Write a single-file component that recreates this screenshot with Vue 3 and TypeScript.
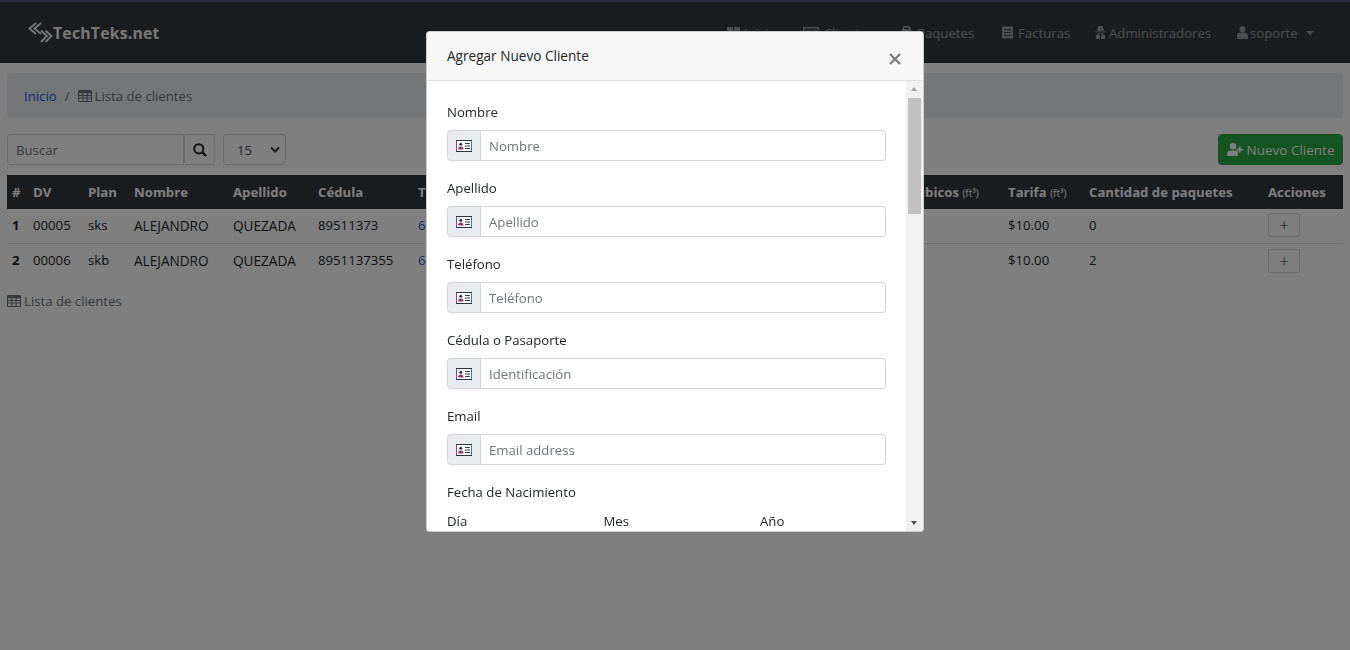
<template>
  <div class="page">
    <nav class="navbar">
      <a class="brand">
        <svg class="brand-logo" width="25" height="21" viewBox="0 0 25 21" fill="none" stroke="currentColor" stroke-width="1.8">
          <path d="M8 1 1.500 6.500 8 12M13 1 6.500 6.500 13 12" />
          <path d="M13 8.500 19 14l-6 6M17.500 8.500 23.500 14l-6 6" />
        </svg>
        TechTeks.net
      </a>
      <ul class="nav-links">
        <li v-for="item in navItems" :key="item.label" :style="{ width: item.width + 'px' }">
          <svg :width="item.iconW" height="13" viewBox="0 0 14 14" preserveAspectRatio="none" fill="currentColor" :style="{ marginRight: item.gap + 'px' }">
            <path :d="item.icon" fill-rule="evenodd" />
          </svg>
          {{ item.label }}<span v-if="item.caret" class="caret"></span>
        </li>
      </ul>
    </nav>

    <main class="content">
      <div class="breadcrumb">
        <a class="link">Inicio</a>
        <span class="sep">/</span>
        <svg class="table-icon" width="14" height="12" viewBox="0 0 14 12" fill="currentColor"><path :d="tableIcon" fill-rule="evenodd" /></svg>
        <span>Lista de clientes</span>
      </div>

      <div class="toolbar">
        <input class="search" placeholder="Buscar" />
        <button class="search-btn">
          <svg width="14" height="14" viewBox="0 0 14 14" fill="none" stroke="#212529" stroke-width="2"><circle cx="5.800" cy="5.800" r="4.600" /><path d="M9.200 9.200 13 13" stroke-width="2.400" /></svg>
        </button>
        <div class="per-page">
          <span>15</span>
          <svg width="10" height="8" viewBox="0 0 10 8" fill="none" stroke="#343a40" stroke-width="2"><path d="M1 1.500 5 5.500 9 1.500" /></svg>
        </div>
        <button class="new-btn">
          <svg width="16" height="13" viewBox="0 0 16 13" fill="currentColor"><path :d="userPlusIcon" /></svg>
          Nuevo Cliente
        </button>
      </div>

      <table class="clients">
        <colgroup>
          <col v-for="w in colWidths" :key="w.id" :style="{ width: w.px + 'px' }" />
        </colgroup>
        <thead>
          <tr>
            <th>#</th><th>DV</th><th>Plan</th><th>Nombre</th><th>Apellido</th><th>Cédula</th><th>Teléfono</th>
            <th>Email</th><th>Peso (lb)</th><th>Cúbicos <small>(ft³)</small></th><th>Tarifa <small>(ft³)</small></th>
            <th>Cantidad de paquetes</th><th>Acciones</th>
          </tr>
        </thead>
        <tbody>
          <tr v-for="(row, i) in clients" :key="row.dv">
            <th>{{ i + 1 }}</th>
            <td>{{ row.dv }}</td>
            <td>{{ row.plan }}</td>
            <td class="caps">ALEJANDRO</td>
            <td class="caps">QUEZADA</td>
            <td>{{ row.cedula }}</td>
            <td><a class="link">{{ row.phone }}</a></td>
            <td></td>
            <td></td>
            <td></td>
            <td>$10.00</td>
            <td>{{ row.count }}</td>
            <td><button class="plus">+</button></td>
          </tr>
        </tbody>
      </table>

      <div class="caption">
        <svg class="table-icon" width="14" height="12" viewBox="0 0 14 12" fill="currentColor"><path :d="tableIcon" fill-rule="evenodd" /></svg>
        Lista de clientes
      </div>
    </main>

    <div class="backdrop"></div>

    <div class="modal">
      <header class="modal-header">
        <h5>Agregar Nuevo Cliente</h5>
        <svg class="close" width="12" height="12" viewBox="0 0 12 12" stroke="#7a7a7a" stroke-width="2.200"><path d="M1 1l10 10M11 1 1 11" /></svg>
      </header>
      <div class="modal-main">
        <form class="modal-body">
          <div v-for="field in fields" :key="field.label" class="form-group">
            <label>{{ field.label }}</label>
            <div class="input-group">
              <span class="addon">
                <svg width="16" height="12" viewBox="0 0 16 12" fill="none">
                  <rect x=".5" y=".5" width="15" height="11" fill="#fff" stroke="#2c3350" />
                  <path d="M.5 1v10" stroke="#8a3f9c" />
                  <path d="M15.500 1v10" stroke="#3d7f98" />
                  <circle cx="4.800" cy="4.200" r="1.500" fill="#2c3350" />
                  <path d="M2 9.500c0-2 1.200-3 2.800-3s2.800 1 2.800 3z" fill="#8c3a5c" />
                  <path d="M9 3.500h5M9 6h5M9 8.500h5" stroke="#2f3f55" />
                </svg>
              </span>
              <input :placeholder="field.placeholder" />
            </div>
          </div>
          <div class="birth-title">Fecha de Nacimiento</div>
          <div class="birth-row">
            <span>Día</span><span>Mes</span><span>Año</span>
          </div>
        </form>
        <div class="scrollbar">
          <span class="arrow up"></span>
          <div class="track"><div class="thumb"></div></div>
          <span class="arrow down"></span>
        </div>
      </div>
    </div>
  </div>
</template>

<script setup lang="ts">
const tableIcon = 'M1.300 0h11.400C13.400 0 14 .6 14 1.300v9.400c0 .7-.6 1.300-1.300 1.300H1.300C.6 12 0 11.400 0 10.700V1.300C0 .6.6 0 1.300 0zM1 3.200V5h3.300V3.200zM5.300 3.200V5h3.400V3.200zM9.700 3.200V5H13V3.200zM1 6v1.600h3.300V6zM5.300 6v1.600h3.400V6zM9.700 6v1.600H13V6zM1 8.600V11h3.300V8.600zM5.300 8.600V11h3.400V8.600zM9.700 8.600V11H13V8.600z'
const userPlusIcon = 'M6 0a3.200 3.200 0 1 1 0 6.400A3.200 3.200 0 0 1 6 0zM0 13v-1.800C0 9 1.600 7.400 3.600 7.400h4.800c1 0 1.900.4 2.500 1V13zM12 3.600h1.600v2.200H16v1.600h-2.400v2.200H12V7.400H9.600V5.800H12z'

const navItems = [
  { label: 'Inicio', width: 76, iconW: 13, gap: 4, icon: 'M0 1h6.500v5.500H0zM7.500 1H14v5.500H7.500zM0 7.500h6.500V13H0zM7.500 7.500H14V13H7.500z' },
  { label: 'Clientes', width: 98, iconW: 16, gap: 5, icon: 'M0 1h14v12H0zM1.300 2.800v8.900h11.400V2.800zM3 4.500h3v3H3zM8 4.500h4v1H8zM8 6.500h4v1H8zM3 8.500h9v2H3z' },
  { label: 'Paquetes', width: 101, iconW: 11, gap: 5, icon: 'M3 0h8l2 4v9H1V4zM4.500 1.500 3.800 3.500h6.400L9.500 1.500z' },
  { label: 'Facturas', width: 93, iconW: 11, gap: 5, icon: 'M0 .5h14V13.500H0zM2.500 3.500v1.200h9V3.500zM2.500 6.400v1.200h9V6.400zM2.500 9.300v1.200h9V9.300z' },
  { label: 'Administradores', width: 142, iconW: 11, gap: 3, icon: 'M4 0h6l1.500 5h-9zM0 5.800h14v1H0zM3.500 7.500h2.500v1.500H3.500zM8 7.500h2.500v1.500H8zM1 10l3-1 2 1 .5 4H1zM13 10l-3-1-2 1-.5 4H13z' },
  { label: 'soporte', width: 86, iconW: 11, gap: 2, caret: true, icon: 'M7 0a3.800 3.800 0 0 1 3.800 3.800c0 1.700-1.100 3.200-3.800 3.200S3.200 5.500 3.200 3.800A3.800 3.800 0 0 1 7 0zM0 14v-3.500C0 8.600 1.800 7.400 3.500 7.400h7c1.700 0 3.500 1.200 3.500 3.100V14z' },
]

const colWidths = [21, 55, 46, 99, 85, 100, 210, 180, 100, 100, 81, 179, 80].map((px, id) => ({ id, px }))

const clients = [
  { dv: '00005', plan: 'sks', cedula: '89511373', phone: '6000-0000', count: 0 },
  { dv: '00006', plan: 'skb', cedula: '8951137355', phone: '6000-0000', count: 2 },
]

const fields = [
  { label: 'Nombre', placeholder: 'Nombre' },
  { label: 'Apellido', placeholder: 'Apellido' },
  { label: 'Teléfono', placeholder: 'Teléfono' },
  { label: 'Cédula o Pasaporte', placeholder: 'Identificación' },
  { label: 'Email', placeholder: 'Email address' },
]
</script>

<style>
html, body { overflow: hidden; }
</style>

<style scoped>
.page {
  height: 650px;
  background: #fff;
  color: #212529;
  font-family: "Open Sans", "Liberation Sans", sans-serif;
  font-size: 13.2px;
  box-sizing: border-box;
}

.navbar {
  height: 63px;
  box-sizing: border-box;
  border-top: 2px solid #5a5a8c;
  background: #343a40;
  display: flex;
  align-items: center;
  justify-content: space-between;
  padding: 0 27px 0 28px;
}

.brand {
  display: flex;
  align-items: center;
  color: #f0f0f0;
  font-weight: 700;
  font-size: 15.8px;
  letter-spacing: .2px;
}

.nav-links {
  display: flex;
  list-style: none;
  margin: 0;
  padding: 0;
  color: rgba(255, 255, 255, .5);
}

.nav-links li {
  display: flex;
  align-items: center;
  white-space: nowrap;
}

.caret {
  margin-left: 8px;
  border-top: 4px solid currentColor;
  border-left: 4px solid transparent;
  border-right: 4px solid transparent;
}

.content { padding: 10px 7px; }

.breadcrumb {
  height: 45px;
  box-sizing: border-box;
  padding: 0 17px;
  border-radius: 4px;
  background: #e9ecef;
  color: #6c757d;
  display: flex;
  align-items: center;
}

.sep { margin: 0 8px; }
.table-icon { margin-right: 3px; }
.link { color: #1060f0; }

.toolbar {
  margin-top: 16px;
  display: flex;
  align-items: center;
}

.search {
  width: 177px;
  height: 31px;
  box-sizing: border-box;
  padding: 0 8px;
  border: 1px solid #ced4da;
  border-radius: 4px 0 0 4px;
  font: inherit;
}

.search::placeholder, .input-group input::placeholder { color: #6c757d; }

.search-btn {
  width: 31px;
  height: 31px;
  padding: 0;
  background: #fff;
  border: 1px solid #ced4da;
  border-radius: 3px 4px 4px 3px;
  display: flex;
  align-items: center;
  justify-content: center;
}

.per-page {
  width: 63px;
  height: 31px;
  box-sizing: border-box;
  margin-left: 8px;
  padding: 0 5px 0 13px;
  border: 1px solid #ced4da;
  border-radius: 4px;
  color: #495057;
  display: flex;
  align-items: center;
  justify-content: space-between;
}

.new-btn {
  margin-left: auto;
  width: 125px;
  height: 31px;
  padding: 0;
  border: 1px solid #28a745;
  border-radius: 4px;
  background: #28a745;
  color: #fff;
  font: inherit;
  font-size: 13.500px;
  display: flex;
  align-items: center;
  justify-content: center;
  gap: 4px;
}

.clients {
  width: 1336px;
  margin-top: 10px;
  border-collapse: collapse;
  table-layout: fixed;
}

.clients th, .clients td {
  height: 34px;
  padding: 0 5px;
  text-align: left;
  white-space: nowrap;
  box-sizing: border-box;
}

.clients thead th {
  background: #343a40;
  color: #fff;
  font-weight: 700;
}

.clients tbody tr > * { padding-bottom: 1px; }
.clients tbody tr + tr > * { height: 35px; border-top: 1px solid #dee2e6; }
.clients tbody th { font-weight: 700; }
.clients small { font-size: 10px; font-weight: 400; }
.clients .caps { font-size: 13.6px; }

.plus {
  display: block;
  width: 32px;
  height: 24px;
  padding: 0;
  background: #fff;
  border: 1px solid #ced4da;
  border-radius: 3px;
  color: #212529;
  font: inherit;
  font-size: 17px;
  font-weight: 300;
  line-height: 20px;
}

.clients tbody tr + tr .plus { margin-top: 1px; }

.caption {
  margin-top: 14px;
  color: #6c757d;
  display: flex;
  align-items: center;
}

.backdrop {
  position: fixed;
  inset: 0;
  background: #000;
  opacity: .5;
}

.modal {
  position: fixed;
  top: 31px;
  left: 426px;
  width: 498px;
  height: 501px;
  box-sizing: border-box;
  background: #fff;
  border: 1px solid rgba(0, 0, 0, .2);
  border-radius: 4px;
  display: flex;
  flex-direction: column;
  overflow: hidden;
}

.modal-header {
  height: 49px;
  flex: none;
  box-sizing: border-box;
  padding: 0 22px 0 20px;
  background: #f7f7f7;
  border-bottom: 1px solid #dee2e6;
  display: flex;
  align-items: center;
  justify-content: space-between;
}

.modal-header h5 {
  margin: 0 0 2px;
  font-size: 13.6px;
  font-weight: 400;
}

.close { margin-top: 5px; }

.modal-main {
  flex: 1;
  min-height: 0;
  display: flex;
}

.modal-body {
  flex: 1;
  overflow: hidden;
  padding: 21px 20px 0 20px;
}

.form-group { margin-bottom: 17px; }

.form-group label {
  display: block;
  height: 20px;
  margin-bottom: 8px;
  line-height: 20px;
}

.input-group {
  display: flex;
  height: 31px;
}

.addon {
  width: 34px;
  box-sizing: border-box;
  background: #e9ecef;
  border: 1px solid #ced4da;
  border-radius: 4px 0 0 4px;
  display: flex;
  align-items: center;
  justify-content: center;
}

.input-group input {
  flex: 1;
  min-width: 0;
  box-sizing: border-box;
  padding: 0 8px;
  border: 1px solid #ced4da;
  border-left: 0;
  border-radius: 0 4px 4px 0;
  font: inherit;
}

.birth-title { line-height: 20px; }

.birth-row {
  margin-top: 9px;
  display: grid;
  grid-template-columns: repeat(3, 156.500px);
  line-height: 20px;
}

.scrollbar {
  flex: none;
  width: 17px;
  background: #f1f1f1;
  display: flex;
  flex-direction: column;
  align-items: center;
}

.arrow {
  flex: none;
  height: 17px;
  width: 100%;
  position: relative;
}

.arrow::after {
  content: "";
  position: absolute;
  left: 5px;
  border-left: 3.500px solid transparent;
  border-right: 3.500px solid transparent;
}

.arrow.up::after { top: 6px; border-bottom: 4px solid #a3a3a3; }
.arrow.down::after { top: 7px; border-top: 4px solid #505050; }

.track { flex: 1; width: 100%; }

.thumb {
  width: 13px;
  height: 116px;
  margin-left: 2px;
  background: #c1c1c1;
}
</style>
